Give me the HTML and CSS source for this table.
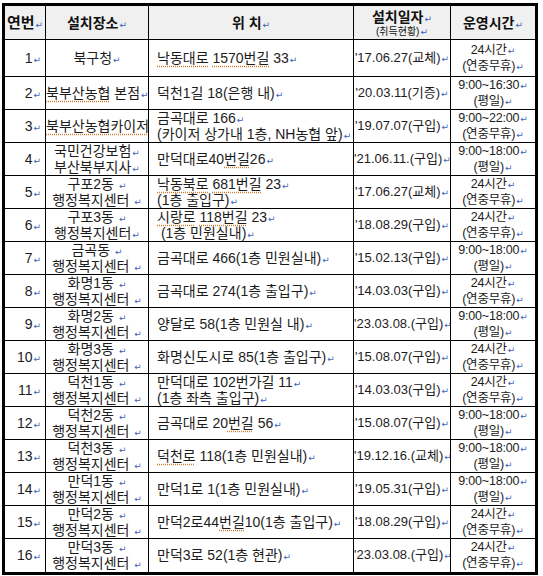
FILE: index.html
```html
<!DOCTYPE html>
<html lang="ko">
<head>
<meta charset="utf-8">
<title>설치장소</title>
<link rel="stylesheet" href="styles.css">
</head>
<body>
<table class="grid">
  <colgroup>
    <col class="c1"><col class="c2"><col class="c3"><col class="c4"><col class="c5">
  </colgroup>
  <thead>
    <tr class="head">
      <th class="h-big">연번<i class="m">↵</i></th>
      <th>설치장소<i class="m">↵</i></th>
      <th>위 치<i class="m">↵</i></th>
      <th><div class="h-l1">설치일자<i class="m">↵</i></div><div class="h-l2">(취득현황)<i class="m">↵</i></div></th>
      <th>운영시간<i class="m">↵</i></th>
    </tr>
  </thead>
  <tbody>
    <tr class="first">
      <td class="no">1<i class="m">↵</i></td>
      <td class="pl">북구청<i class="m">↵</i></td>
      <td class="loc"><span class="sp">낙동대로</span> <span class="sp">1570번길</span> 33<i class="m">↵</i></td>
      <td class="dt">'17.06.27(교체)<i class="m">↵</i></td>
      <td class="tm">24시간<i class="m">↵</i><br>(연중무휴)<i class="m">↵</i></td>
    </tr>
    <tr>
      <td class="no">2<i class="m">↵</i></td>
      <td class="pl"><span class="sp">북부산농협</span> 본점<i class="m">↵</i></td>
      <td class="loc">덕천1길 18(은행 내)<i class="m">↵</i></td>
      <td class="dt">'20.03.11(기증)<i class="m">↵</i></td>
      <td class="tm">9:00~16:30<i class="m">↵</i><br>(평일)<i class="m">↵</i></td>
    </tr>
    <tr>
      <td class="no">3<i class="m">↵</i></td>
      <td class="pl"><span class="sp">북부산농협카이저</span><i class="m">↵</i></td>
      <td class="loc">금곡대로 166<i class="m">↵</i><br>(카이저 <span class="sp">상가내</span> 1층, <span class="sp">NH</span>농협 앞)<i class="m">↵</i></td>
      <td class="dt">'19.07.07(구입)<i class="m">↵</i></td>
      <td class="tm">9:00~22:00<i class="m">↵</i><br>(연중무휴)<i class="m">↵</i></td>
    </tr>
    <tr>
      <td class="no">4<i class="m">↵</i></td>
      <td class="pl">국민건강보험<i class="m">↵</i><br>부산북부지사<i class="m">↵</i></td>
      <td class="loc">만덕대로40<span class="sp">번길</span>26<i class="m">↵</i></td>
      <td class="dt">'21.06.11.(구입)<i class="m">↵</i></td>
      <td class="tm">9:00~18:00<i class="m">↵</i><br>(평일)<i class="m">↵</i></td>
    </tr>
    <tr>
      <td class="no">5<i class="m">↵</i></td>
      <td class="pl">구포2동 <i class="m">↵</i><br>행정복지센터 <i class="m">↵</i></td>
      <td class="loc"><span class="sp">낙동북로</span> <span class="sp">681번길</span> 23<i class="m">↵</i><br>(1층 출입구)<i class="m">↵</i></td>
      <td class="dt">'17.06.27(교체)<i class="m">↵</i></td>
      <td class="tm">24시간<i class="m">↵</i><br>(연중무휴)<i class="m">↵</i></td>
    </tr>
    <tr>
      <td class="no">6<i class="m">↵</i></td>
      <td class="pl">구포3동 <i class="m">↵</i><br>행정복지센터<i class="m">↵</i></td>
      <td class="loc"><span class="sp">시랑로</span> <span class="sp">118번길</span> 23<i class="m">↵</i><br>&nbsp;(1층 민원실내)<i class="m">↵</i></td>
      <td class="dt">'18.08.29(구입)<i class="m">↵</i></td>
      <td class="tm">24시간<i class="m">↵</i><br>(연중무휴)<i class="m">↵</i></td>
    </tr>
    <tr>
      <td class="no">7<i class="m">↵</i></td>
      <td class="pl">금곡동 <i class="m">↵</i><br>행정복지센터 <i class="m">↵</i></td>
      <td class="loc">금곡대로 466(1층 민원실내)<i class="m">↵</i></td>
      <td class="dt">'15.02.13(구입)<i class="m">↵</i></td>
      <td class="tm">9:00~18:00<i class="m">↵</i><br>(평일)<i class="m">↵</i></td>
    </tr>
    <tr>
      <td class="no">8<i class="m">↵</i></td>
      <td class="pl">화명1동 <i class="m">↵</i><br>행정복지센터 <i class="m">↵</i></td>
      <td class="loc">금곡대로 274(1층 출입구)<i class="m">↵</i></td>
      <td class="dt">'14.03.03(구입)<i class="m">↵</i></td>
      <td class="tm">24시간<i class="m">↵</i><br>(연중무휴)<i class="m">↵</i></td>
    </tr>
    <tr>
      <td class="no">9<i class="m">↵</i></td>
      <td class="pl">화명2동 <i class="m">↵</i><br>행정복지센터 <i class="m">↵</i></td>
      <td class="loc">양달로 58(1층 민원실 내)<i class="m">↵</i></td>
      <td class="dt">'23.03.08.(구입)<i class="m">↵</i></td>
      <td class="tm">9:00~18:00<i class="m">↵</i><br>(평일)<i class="m">↵</i></td>
    </tr>
    <tr>
      <td class="no">10<i class="m">↵</i></td>
      <td class="pl">화명3동 <i class="m">↵</i><br>행정복지센터 <i class="m">↵</i></td>
      <td class="loc">화명신도시로 85(1층 출입구)<i class="m">↵</i></td>
      <td class="dt">'15.08.07(구입)<i class="m">↵</i></td>
      <td class="tm">24시간<i class="m">↵</i><br>(연중무휴)<i class="m">↵</i></td>
    </tr>
    <tr>
      <td class="no">11<i class="m">↵</i></td>
      <td class="pl">덕천1동 <i class="m">↵</i><br>행정복지센터 <i class="m">↵</i></td>
      <td class="loc">만덕대로 102번가길 11<i class="m">↵</i><br>(1층 좌측 출입구)<i class="m">↵</i></td>
      <td class="dt">'14.03.03(구입)<i class="m">↵</i></td>
      <td class="tm">24시간<i class="m">↵</i><br>(연중무휴)<i class="m">↵</i></td>
    </tr>
    <tr>
      <td class="no">12<i class="m">↵</i></td>
      <td class="pl">덕천2동 <i class="m">↵</i><br>행정복지센터 <i class="m">↵</i></td>
      <td class="loc">금곡대로 20<span class="sp">번길</span> 56<i class="m">↵</i></td>
      <td class="dt">'15.08.07(구입)<i class="m">↵</i></td>
      <td class="tm">9:00~18:00<i class="m">↵</i><br>(평일)<i class="m">↵</i></td>
    </tr>
    <tr>
      <td class="no">13<i class="m">↵</i></td>
      <td class="pl">덕천3동 <i class="m">↵</i><br>행정복지센터 <i class="m">↵</i></td>
      <td class="loc"><span class="sp">덕천로</span> 118(1층 민원실내)<i class="m">↵</i></td>
      <td class="dt">'19.12.16.(교체)<i class="m">↵</i></td>
      <td class="tm">9:00~18:00<i class="m">↵</i><br>(평일)<i class="m">↵</i></td>
    </tr>
    <tr>
      <td class="no">14<i class="m">↵</i></td>
      <td class="pl">만덕1동 <i class="m">↵</i><br>행정복지센터 <i class="m">↵</i></td>
      <td class="loc">만덕1로 1(1층 민원실내)<i class="m">↵</i></td>
      <td class="dt">'19.05.31(구입)<i class="m">↵</i></td>
      <td class="tm">9:00~18:00<i class="m">↵</i><br>(평일)<i class="m">↵</i></td>
    </tr>
    <tr>
      <td class="no">15<i class="m">↵</i></td>
      <td class="pl">만덕2동 <i class="m">↵</i><br>행정복지센터 <i class="m">↵</i></td>
      <td class="loc">만덕2로44<span class="sp">번길</span>10(1층 출입구)<i class="m">↵</i></td>
      <td class="dt">'18.08.29(구입)<i class="m">↵</i></td>
      <td class="tm">24시간<i class="m">↵</i><br>(연중무휴)<i class="m">↵</i></td>
    </tr>
    <tr class="last">
      <td class="no">16<i class="m">↵</i></td>
      <td class="pl">만덕3동 <i class="m">↵</i><br>행정복지센터 <i class="m">↵</i></td>
      <td class="loc">만덕3로 52(1층 현관)<i class="m">↵</i></td>
      <td class="dt">'23.03.08.(구입)<i class="m">↵</i></td>
      <td class="tm">24시간<i class="m">↵</i><br>(연중무휴)<i class="m">↵</i></td>
    </tr>
  </tbody>
</table>
</body>
</html>
```

FILE: styles.css
```css
html, body {
  background: #ffffff;
}
body {
  margin: 3px 0 0 2px;
  font-family: "Liberation Sans", "Noto Sans CJK KR", sans-serif;
  font-size: 14px;
  color: #1c1c1c;
}
.grid {
  width: 536px;
  table-layout: fixed;
  border-collapse: separate;
  border-spacing: 0;
  border: 3px solid #000;
}
.c1 { width: 41px; }
.c2 { width: 103px; }
.c3 { width: 205px; }
.c4 { width: 97px; }
.c5 { width: 84px; }

.grid th,
.grid td {
  padding: 0;
  border-right: 1px solid #000;
  border-bottom: 1px solid #000;
  vertical-align: middle;
  white-space: nowrap;
  overflow: hidden;
  line-height: 16px;
}
.grid th:last-child,
.grid td:last-child {
  border-right: 0;
}
.grid tr.last td {
  border-bottom: 0;
}
.head {
  height: 34px;
}
.head th {
  background: #f0f0f0;
  font-size: 14px;
  font-weight: bold;
  text-align: center;
  color: #111;
}
.grid th.h-big {
  font-size: 15px;
}
.h-l1 {
  line-height: 18px;
}
.h-l2 {
  font-size: 10px;
  font-weight: normal;
  line-height: 12px;
}
tbody tr {
  height: 32.8px;
}
tbody tr.first {
  height: 37px;
}
.grid td.no {
  text-align: right;
  padding-right: 4px;
}
.pl {
  text-align: center;
}
.grid td.loc {
  text-align: left;
  padding-left: 8px;
}
.grid td.dt {
  text-align: center;
  font-size: 13px;
}
.grid td.tm {
  text-align: center;
  font-size: 12.5px;
  letter-spacing: -0.2px;
}
.m {
  font-style: normal;
  font-family: "DejaVu Sans", sans-serif;
  font-size: 9px;
  font-weight: normal;
  line-height: 0;
  letter-spacing: 0;
  color: #3d5fb8;
  margin-left: 1px;
}
.sp {
  text-decoration: underline dotted #d07a2a;
  text-underline-offset: 3px;
}
```
